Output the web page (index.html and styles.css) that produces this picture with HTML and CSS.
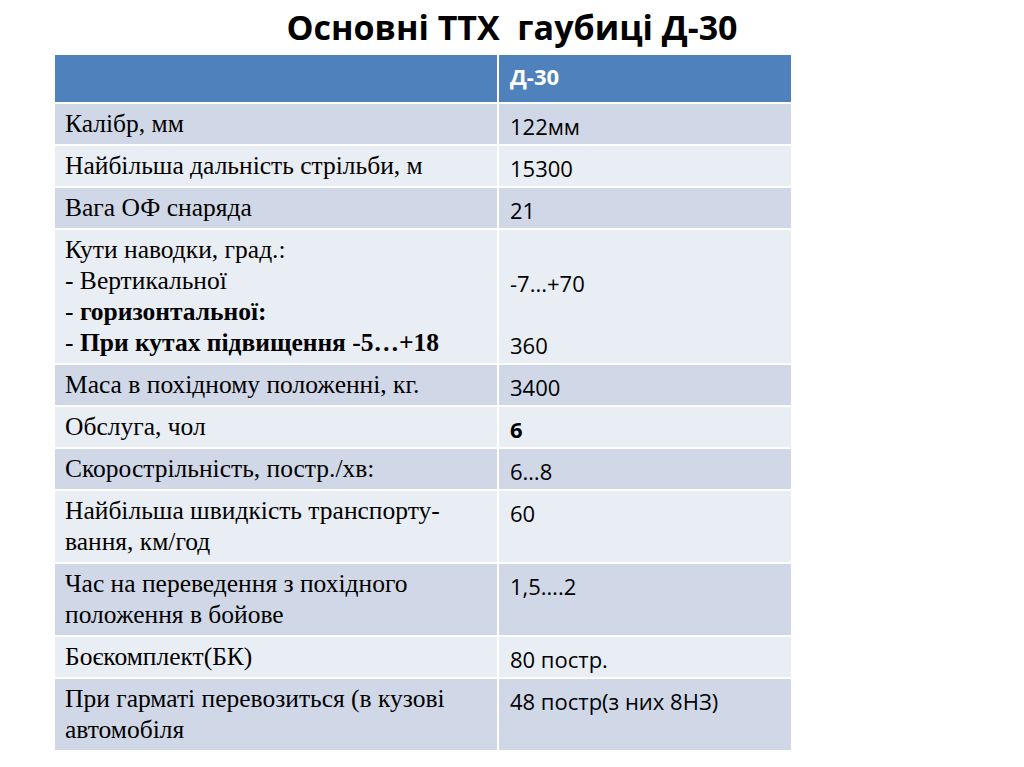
FILE: index.html
```html
<!DOCTYPE html>
<html lang="uk">
<head>
<meta charset="utf-8">
<title>Основні ТТХ гаубиці Д-30</title>
<link rel="stylesheet" href="styles.css">
</head>
<body>
<h1 class="title">Основні ТТХ&nbsp; гаубиці Д-30</h1>
<table class="ttx">
  <tr class="head"><th class="c1"></th><th class="c2">Д-30</th></tr>
  <tr class="odd"><td class="c1">Калібр, мм</td><td class="c2">122мм</td></tr>
  <tr class="even"><td class="c1">Найбільша дальність стрільби, м</td><td class="c2">15300</td></tr>
  <tr class="odd"><td class="c1">Вага ОФ снаряда</td><td class="c2">21</td></tr>
  <tr class="even"><td class="c1">Кути наводки, град.:<br>- Вертикальної<br>- <b>горизонтальної:</b><br>- <b>При кутах підвищення -5…+18</b></td><td class="c2"><br>-7...+70<br><br>360</td></tr>
  <tr class="odd"><td class="c1">Маса в похідному положенні, кг.</td><td class="c2">3400</td></tr>
  <tr class="even"><td class="c1">Обслуга, чол</td><td class="c2"><b>6</b></td></tr>
  <tr class="odd"><td class="c1">Скорострільність, постр./хв:</td><td class="c2">6…8</td></tr>
  <tr class="even"><td class="c1">Найбільша швидкість транспорту-<br>вання, км/год</td><td class="c2">60</td></tr>
  <tr class="odd"><td class="c1">Час на переведення з похідного<br>положення в бойове</td><td class="c2">1,5….2</td></tr>
  <tr class="even"><td class="c1">Боєкомплект(БК)</td><td class="c2">80 постр.</td></tr>
  <tr class="odd"><td class="c1">При гарматі перевозиться (в кузові<br>автомобіля</td><td class="c2">48 постр(з них 8НЗ)</td></tr>
</table>
</body>
</html>
```
FILE: styles.css
```css
html, body {
  margin: 0;
  padding: 0;
  background: #ffffff;
}
.title {
  margin: 0;
  height: 53px;
  padding-top: 2px;
  box-sizing: border-box;
  text-align: center;
  font-family: "Open Sans", "Liberation Sans", sans-serif;
  font-weight: 700;
  font-size: 34px;
  line-height: 50px;
  color: #000;
}
.ttx {
  margin-left: 53px;
  border-collapse: separate;
  border-spacing: 2px;
  width: 740px;
}
.ttx td, .ttx th {
  vertical-align: top;
  text-align: left;
  padding: 4px 8px 5px 10px;
}
.c1 {
  width: 424px;
  font-family: "Liberation Serif", "Times New Roman", serif;
  font-size: 25.5px;
  line-height: 31px;
  color: #000;
}
.ttx .c2 {
  font-family: "Open Sans", "Liberation Sans", sans-serif;
  font-size: 22px;
  line-height: 31px;
  color: #000;
  padding-left: 11px;
  padding-top: 7px;
  padding-bottom: 2px;
}
.ttx .head th {
  background: #4f81bd;
  height: 39px;
  color: #fff;
  font-weight: 700;
  padding-top: 6px;
  padding-bottom: 2px;
}
.odd td { background: #d0d8e8; }
.even td { background: #e9edf4; }
```
